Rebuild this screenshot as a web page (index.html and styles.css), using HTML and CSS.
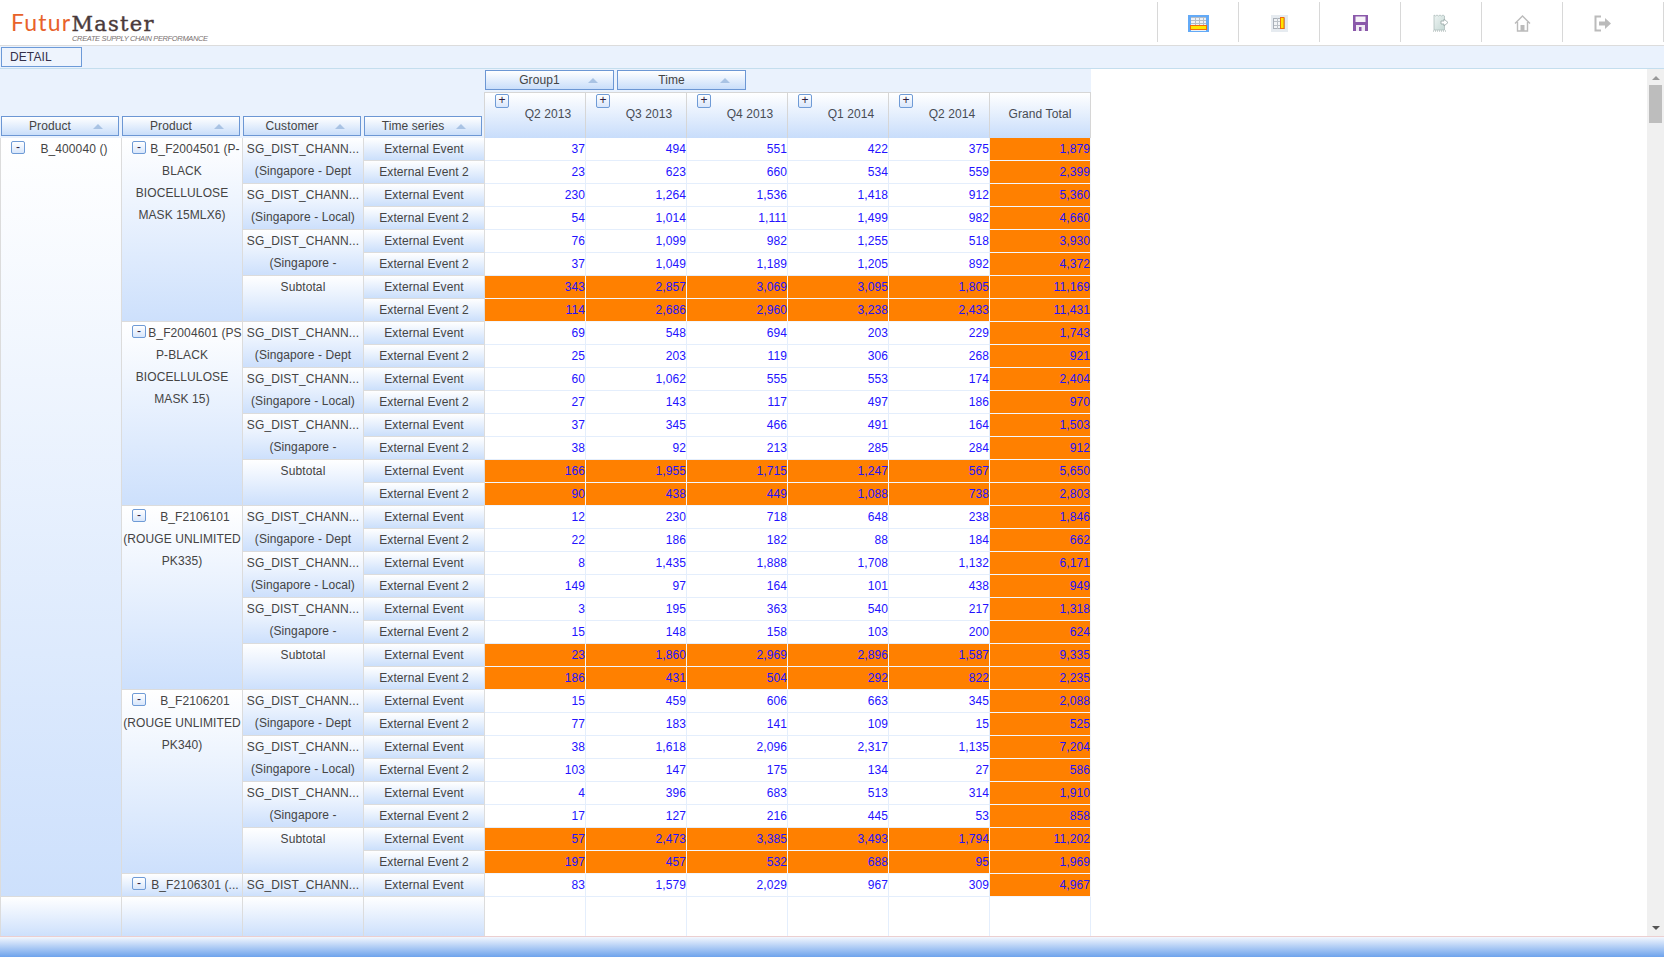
FILE: index.html
```html
<!DOCTYPE html>
<html lang="en">
<head>
    <meta charset="UTF-8">
    <title>FuturMaster - Detail</title>
    <link rel="stylesheet" href="styles.css">
</head>
<body>
    <header class="toolbar">
        <div class="logo">
            <div class="logo-name"><span class="futur">Futur</span><span class="master">Master</span></div>
            <div class="logo-tag">CREATE SUPPLY CHAIN PERFORMANCE</div>
        </div>
        <div class="tool">
            <svg width="21" height="17" viewBox="0 0 21 17"><rect width="21" height="17" fill="#63aaf7"/><rect x="3" y="2" width="15" height="14" fill="#eef1f5"/><path d="M3 2.500h15M3 5.500h15M3 8.500h15M7.500 2v8M11.500 2v8M15.500 2v8" stroke="#b4bcc6" fill="none"/><rect x="2.500" y="10.500" width="16" height="4" fill="#ffe600" stroke="#f06a10"/></svg>
        </div>
        <div class="tool">
            <svg width="17" height="17" viewBox="0 0 17 17"><rect width="17" height="17" fill="#e6ebf0"/><rect x="2.500" y="3.500" width="11" height="10" fill="#f2f4f6" stroke="#aab0b8"/><path d="M3 6.500h6M3 10.500h6M6.500 3v11" stroke="#bcc2c8"/><rect x="9.500" y="2.500" width="3.500" height="11" fill="#ffe600" stroke="#f06a10"/></svg>
        </div>
        <div class="tool">
            <svg width="15" height="16" viewBox="0 0 15 16"><rect width="15" height="16" fill="#8a58aa"/><rect x="2.500" y="1.500" width="10" height="5.500" fill="#f6f2f8"/><rect x="3" y="10" width="9" height="6" fill="#f0eaf4"/><rect x="6" y="12" width="2.500" height="4" fill="#8a58aa"/></svg>
        </div>
        <div class="tool">
            <svg width="16" height="18" viewBox="0 0 16 18">
                <defs><linearGradient id="doc" x1="0" y1="0" x2="1" y2="1"><stop offset="0" stop-color="#eef4f3"/><stop offset="1" stop-color="#c6d9d5"/></linearGradient></defs>
                <path d="M1 1l1.500 1 1.500-1 1.500 1 1.500-1 1.500 1 1.500-1 1.500 1V16H1z" fill="url(#doc)" stroke="#a8b8b6" stroke-width=".7"/>
                <path d="M8 7h3V5l4 3.500-4 3.500v-2H8z" fill="#fff" stroke="#98a6a4" stroke-width=".8"/>
                <path d="M0 17h14" stroke="#a0aeac" stroke-dasharray="1 1"/>
            </svg>
        </div>
        <div class="tool">
            <svg width="17" height="17" viewBox="0 0 17 17"><path d="M1 8.500L8.500 1 16 8.500M3.500 7v9h10V7" fill="#fff" stroke="#bbb" stroke-width="1.400"/><rect x="6.500" y="10" width="4" height="6" fill="#bbb"/></svg>
        </div>
        <div class="tool tool-last">
            <svg width="17" height="17" viewBox="0 0 17 17"><path d="M7 1.500H1.500v14H7" fill="none" stroke="#bbb" stroke-width="2"/><path d="M5 6.500h6V3l6 5.500-6 5.500v-3.500H5z" fill="#bbb"/></svg>
        </div>
    </header>

    <nav class="sections">
        <div class="section-tab">DETAIL</div>
    </nav>

    <main class="content">
        <table class="pivot">
            <colgroup>
                <col class="c-row-first"><col class="c-row"><col class="c-row"><col class="c-row">
                <col class="c-num"><col class="c-num"><col class="c-num"><col class="c-num"><col class="c-num"><col class="c-num">
            </colgroup>
            <thead>
                <tr class="tabs-row">
                    <td colspan="4" rowspan="2" class="row-tabs">
                        <div class="tabs">
                            <div class="tab tab-row"><span>Product</span><i class="tab-arrow"></i></div>
                            <div class="tab tab-row"><span>Product</span><i class="tab-arrow"></i></div>
                            <div class="tab tab-row"><span>Customer</span><i class="tab-arrow"></i></div>
                            <div class="tab tab-row"><span>Time series</span><i class="tab-arrow"></i></div>
                        </div>
                    </td>
                    <td colspan="6" class="col-tabs">
                        <div class="tabs">
                            <div class="tab tab-col"><span>Group1</span><i class="tab-arrow"></i></div>
                            <div class="tab tab-col"><span>Time</span><i class="tab-arrow"></i></div>
                        </div>
                    </td>
                </tr>
                <tr class="heads-row">
                    <th><span class="toggle toggle-head">+</span><div class="head-label">Q2 2013</div></th>
                    <th><span class="toggle toggle-head">+</span><div class="head-label">Q3 2013</div></th>
                    <th><span class="toggle toggle-head">+</span><div class="head-label">Q4 2013</div></th>
                    <th><span class="toggle toggle-head">+</span><div class="head-label">Q1 2014</div></th>
                    <th><span class="toggle toggle-head">+</span><div class="head-label">Q2 2014</div></th>
                    <th><div class="head-label">Grand Total</div></th>
                </tr>
            </thead>
            <tbody>
                <tr>
                    <td rowspan="33" class="grp first"><span class="toggle">-</span><div class="line">B_400040 ()</div></td>
                    <td rowspan="8" class="grp"><span class="toggle">-</span><div class="line">B_F2004501 (P-</div><div class="line">BLACK</div><div class="line">BIOCELLULOSE</div><div class="line">MASK 15MLX6)</div></td>
                    <td rowspan="2" class="grp"><div class="line">SG_DIST_CHANN...</div><div class="line">(Singapore - Dept</div></td>
                    <td class="ts">External Event</td><td>37</td><td>494</td><td>551</td><td>422</td><td>375</td><td class="total">1,879</td>
                </tr>
                <tr><td class="ts">External Event 2</td><td>23</td><td>623</td><td>660</td><td>534</td><td>559</td><td class="total">2,399</td></tr>
                <tr><td rowspan="2" class="grp"><div class="line">SG_DIST_CHANN...</div><div class="line">(Singapore - Local)</div></td><td class="ts">External Event</td><td>230</td><td>1,264</td><td>1,536</td><td>1,418</td><td>912</td><td class="total">5,360</td></tr>
                <tr><td class="ts">External Event 2</td><td>54</td><td>1,014</td><td>1,111</td><td>1,499</td><td>982</td><td class="total">4,660</td></tr>
                <tr><td rowspan="2" class="grp"><div class="line">SG_DIST_CHANN...</div><div class="line">(Singapore -</div></td><td class="ts">External Event</td><td>76</td><td>1,099</td><td>982</td><td>1,255</td><td>518</td><td class="total">3,930</td></tr>
                <tr><td class="ts">External Event 2</td><td>37</td><td>1,049</td><td>1,189</td><td>1,205</td><td>892</td><td class="total">4,372</td></tr>
                <tr class="sub"><td rowspan="2" class="grp"><div class="line">Subtotal</div></td><td class="ts">External Event</td><td>343</td><td>2,857</td><td>3,069</td><td>3,095</td><td>1,805</td><td class="total">11,169</td></tr>
                <tr class="sub"><td class="ts">External Event 2</td><td>114</td><td>2,686</td><td>2,960</td><td>3,238</td><td>2,433</td><td class="total">11,431</td></tr>

                <tr>
                    <td rowspan="8" class="grp"><span class="toggle">-</span><div class="line">B_F2004601 (PS</div><div class="line">P-BLACK</div><div class="line">BIOCELLULOSE</div><div class="line">MASK 15)</div></td>
                    <td rowspan="2" class="grp"><div class="line">SG_DIST_CHANN...</div><div class="line">(Singapore - Dept</div></td>
                    <td class="ts">External Event</td><td>69</td><td>548</td><td>694</td><td>203</td><td>229</td><td class="total">1,743</td>
                </tr>
                <tr><td class="ts">External Event 2</td><td>25</td><td>203</td><td>119</td><td>306</td><td>268</td><td class="total">921</td></tr>
                <tr><td rowspan="2" class="grp"><div class="line">SG_DIST_CHANN...</div><div class="line">(Singapore - Local)</div></td><td class="ts">External Event</td><td>60</td><td>1,062</td><td>555</td><td>553</td><td>174</td><td class="total">2,404</td></tr>
                <tr><td class="ts">External Event 2</td><td>27</td><td>143</td><td>117</td><td>497</td><td>186</td><td class="total">970</td></tr>
                <tr><td rowspan="2" class="grp"><div class="line">SG_DIST_CHANN...</div><div class="line">(Singapore -</div></td><td class="ts">External Event</td><td>37</td><td>345</td><td>466</td><td>491</td><td>164</td><td class="total">1,503</td></tr>
                <tr><td class="ts">External Event 2</td><td>38</td><td>92</td><td>213</td><td>285</td><td>284</td><td class="total">912</td></tr>
                <tr class="sub"><td rowspan="2" class="grp"><div class="line">Subtotal</div></td><td class="ts">External Event</td><td>166</td><td>1,955</td><td>1,715</td><td>1,247</td><td>567</td><td class="total">5,650</td></tr>
                <tr class="sub"><td class="ts">External Event 2</td><td>90</td><td>438</td><td>449</td><td>1,088</td><td>738</td><td class="total">2,803</td></tr>

                <tr>
                    <td rowspan="8" class="grp"><span class="toggle">-</span><div class="line">B_F2106101</div><div class="line">(ROUGE UNLIMITED</div><div class="line">PK335)</div></td>
                    <td rowspan="2" class="grp"><div class="line">SG_DIST_CHANN...</div><div class="line">(Singapore - Dept</div></td>
                    <td class="ts">External Event</td><td>12</td><td>230</td><td>718</td><td>648</td><td>238</td><td class="total">1,846</td>
                </tr>
                <tr><td class="ts">External Event 2</td><td>22</td><td>186</td><td>182</td><td>88</td><td>184</td><td class="total">662</td></tr>
                <tr><td rowspan="2" class="grp"><div class="line">SG_DIST_CHANN...</div><div class="line">(Singapore - Local)</div></td><td class="ts">External Event</td><td>8</td><td>1,435</td><td>1,888</td><td>1,708</td><td>1,132</td><td class="total">6,171</td></tr>
                <tr><td class="ts">External Event 2</td><td>149</td><td>97</td><td>164</td><td>101</td><td>438</td><td class="total">949</td></tr>
                <tr><td rowspan="2" class="grp"><div class="line">SG_DIST_CHANN...</div><div class="line">(Singapore -</div></td><td class="ts">External Event</td><td>3</td><td>195</td><td>363</td><td>540</td><td>217</td><td class="total">1,318</td></tr>
                <tr><td class="ts">External Event 2</td><td>15</td><td>148</td><td>158</td><td>103</td><td>200</td><td class="total">624</td></tr>
                <tr class="sub"><td rowspan="2" class="grp"><div class="line">Subtotal</div></td><td class="ts">External Event</td><td>23</td><td>1,860</td><td>2,969</td><td>2,896</td><td>1,587</td><td class="total">9,335</td></tr>
                <tr class="sub"><td class="ts">External Event 2</td><td>186</td><td>431</td><td>504</td><td>292</td><td>822</td><td class="total">2,235</td></tr>

                <tr>
                    <td rowspan="8" class="grp"><span class="toggle">-</span><div class="line">B_F2106201</div><div class="line">(ROUGE UNLIMITED</div><div class="line">PK340)</div></td>
                    <td rowspan="2" class="grp"><div class="line">SG_DIST_CHANN...</div><div class="line">(Singapore - Dept</div></td>
                    <td class="ts">External Event</td><td>15</td><td>459</td><td>606</td><td>663</td><td>345</td><td class="total">2,088</td>
                </tr>
                <tr><td class="ts">External Event 2</td><td>77</td><td>183</td><td>141</td><td>109</td><td>15</td><td class="total">525</td></tr>
                <tr><td rowspan="2" class="grp"><div class="line">SG_DIST_CHANN...</div><div class="line">(Singapore - Local)</div></td><td class="ts">External Event</td><td>38</td><td>1,618</td><td>2,096</td><td>2,317</td><td>1,135</td><td class="total">7,204</td></tr>
                <tr><td class="ts">External Event 2</td><td>103</td><td>147</td><td>175</td><td>134</td><td>27</td><td class="total">586</td></tr>
                <tr><td rowspan="2" class="grp"><div class="line">SG_DIST_CHANN...</div><div class="line">(Singapore -</div></td><td class="ts">External Event</td><td>4</td><td>396</td><td>683</td><td>513</td><td>314</td><td class="total">1,910</td></tr>
                <tr><td class="ts">External Event 2</td><td>17</td><td>127</td><td>216</td><td>445</td><td>53</td><td class="total">858</td></tr>
                <tr class="sub"><td rowspan="2" class="grp"><div class="line">Subtotal</div></td><td class="ts">External Event</td><td>57</td><td>2,473</td><td>3,385</td><td>3,493</td><td>1,794</td><td class="total">11,202</td></tr>
                <tr class="sub"><td class="ts">External Event 2</td><td>197</td><td>457</td><td>532</td><td>688</td><td>95</td><td class="total">1,969</td></tr>

                <tr>
                    <td class="grp"><span class="toggle">-</span><div class="line">B_F2106301 (...</div></td>
                    <td class="grp"><div class="line">SG_DIST_CHANN...</div></td>
                    <td class="ts">External Event</td><td>83</td><td>1,579</td><td>2,029</td><td>967</td><td>309</td><td class="total">4,967</td>
                </tr>
            </tbody>
            <tfoot>
                <tr>
                    <td class="foot first"></td><td class="foot"></td><td class="foot"></td><td class="foot"></td>
                    <td></td><td></td><td></td><td></td><td></td><td></td>
                </tr>
            </tfoot>
        </table>
        <div class="blank"></div>
        <div class="scrollbar">
            <i class="arrow-up"></i>
            <div class="thumb"></div>
            <i class="arrow-down"></i>
        </div>
    </main>

    <footer class="statusbar"></footer>
</body>
</html>
```

FILE: styles.css
```css
* {
    box-sizing: border-box;
}
html, body {
    height: 100%;
}
body {
    margin: 0;
    display: flex;
    flex-direction: column;
    overflow: hidden;
    font-family: 'Liberation Sans', Arial, sans-serif;
    font-size: 12px;
    color: #444;
    background: #fff;
}

/* top bar */
.toolbar {
    display: flex;
    align-items: center;
    height: 46px;
    padding-top: 2px;
    padding-bottom: 3px;
    border-bottom: 1px solid #dcdcdc;
    flex-shrink: 0;
}
.logo {
    margin-right: auto;
    padding-left: 11px;
    align-self: flex-start;
    padding-top: 8px;
}
.logo-name {
    display: flex;
    align-items: baseline;
    height: 24px;
    line-height: 24px;
}
.futur {
    font-family: 'Lato', sans-serif;
    font-size: 23px;
    letter-spacing: 1.2px;
    color: #e8622a;
}
.master {
    font-family: 'DejaVu Serif', serif;
    font-size: 21px;
    letter-spacing: 1.3px;
    -webkit-text-stroke: 0.4px #4a3a3a;
    color: #4a3a3a;
}
.logo-tag {
    margin-left: 61px;
    font-size: 7.5px;
    line-height: 9px;
    font-style: italic;
    letter-spacing: -0.35px;
    color: #7a7272;
    white-space: nowrap;
}
.tool {
    width: 81px;
    height: 40px;
    display: flex;
    align-items: center;
    justify-content: center;
    border-left: 1px solid #d8d8d8;
}
.tool svg {
    margin-top: 2px;
}
.tool-last {
    width: 102px;
    padding-right: 21px;
    border-right: 1px solid #d8d8d8;
}

/* tab strip */
.sections {
    height: 23px;
    padding: 1px 0 0 1px;
    background: #eaf2fd;
    border-bottom: 1px solid #c4deee;
    flex-shrink: 0;
}
.section-tab {
    width: 81px;
    height: 20px;
    line-height: 18px;
    padding-left: 8px;
    letter-spacing: 0.1px;
    background: #eef4fd;
    border: 1px solid #6c9ad8;
    color: #33304a;
}

/* main */
.content {
    flex: 1;
    display: flex;
    min-height: 0;
}
.blank {
    flex: 1;
}
.scrollbar {
    width: 17px;
    display: flex;
    flex-direction: column;
    align-items: center;
    background: #f0f0f0;
    padding: 7px 0 6px;
}
.arrow-up, .arrow-down {
    width: 0;
    height: 0;
    border-left: 4px solid transparent;
    border-right: 4px solid transparent;
}
.arrow-up {
    border-bottom: 4px solid #999;
}
.arrow-down {
    margin-top: auto;
    border-top: 4px solid #555;
}
.thumb {
    width: 13px;
    height: 38px;
    margin-top: 5px;
    background: #bdbdbd;
}

/* pivot grid */
.pivot {
    width: 1091px;
    table-layout: fixed;
    border-collapse: separate;
    border-spacing: 0;
    height: 100%;
    letter-spacing: 0.1px;
}
.c-row-first { width: 122px; }
.c-row { width: 121px; }
.c-num { width: 101px; }

.pivot td, .pivot th {
    padding: 0;
    font-size: 12px;
    font-weight: normal;
}
thead td {
    background: #eaf2fd;
}
.tabs-row td {
    height: 23px;
}
.heads-row th {
    height: 46px;
    vertical-align: top;
    text-align: center;
    color: #484c54;
    background: linear-gradient(#fff, #c8ddfb);
    border-top: 1px solid #d6d6d6;
    border-right: 1px solid #d6d6d6;
}
.heads-row th:first-child {
    box-shadow: -1px 0 0 #d6d6d6;
}
.row-tabs {
    vertical-align: bottom;
    padding-bottom: 1px !important;
}
.row-tabs .tabs {
    padding-left: 1px;
    gap: 3px;
    margin-bottom: 1px;
}
.col-tabs {
    vertical-align: top;
    padding-top: 1px !important;
}
.col-tabs .tabs {
    gap: 3px;
}
.tabs {
    display: flex;
}
.tab {
    display: flex;
    align-items: center;
    height: 20px;
    padding-left: 5px;
    padding-right: 15px;
    background: linear-gradient(#fff, #c9defa);
    border: 1px solid #6c97d4;
    color: #444;
}
.tab span {
    flex: 1;
    text-align: center;
}
.tab-row {
    width: 118px;
}
.tab-col {
    width: 129px;
}
.tab-arrow {
    width: 0;
    height: 0;
    border-left: 5px solid transparent;
    border-right: 5px solid transparent;
    border-bottom: 5px solid #a9c3e4;
}
.head-label {
    margin-top: 10px;
    line-height: 22px;
    overflow: hidden;
    white-space: nowrap;
}

.toggle {
    float: left;
    width: 14px;
    height: 13px;
    line-height: 10px;
    margin: 3px 2px 0 10px;
    text-align: center;
    font-size: 12px;
    color: #302040;
    background: linear-gradient(#fff, #d8e6fb);
    border: 1px solid #6f9bd6;
    border-radius: 2px;
}
.toggle-head {
    height: 14px;
    line-height: 11px;
    margin-top: 1px;
}

tbody tr, tfoot tr {
    height: 23px;
}
tbody td {
    height: 23px;
    line-height: 21px;
    text-align: right;
    white-space: nowrap;
    color: #2312ff;
    background: #fff;
    border-right: 1px solid #e4eefc;
    border-bottom: 1px solid #e4eefc;
}
tbody td.grp {
    vertical-align: top;
    text-align: center;
    color: #444;
    background: linear-gradient(#fff, #cde0fc);
    border-right: 1px solid #dcdcdc;
    border-bottom: 1px solid #dcdcdc;
}
tbody td.first, tfoot td.first {
    border-left: 1px solid #dcdcdc;
}
.line {
    height: 22px;
    line-height: 22px;
    overflow: hidden;
    white-space: nowrap;
}
tbody td.ts {
    text-align: center;
    color: #444;
    background: linear-gradient(#fff, #cbdffb);
    border-right: 1px solid #dcdcdc;
    border-bottom: 1px solid #dcdcdc;
}
tbody td.total, tr.sub td:not(.ts):not(.grp) {
    background: #ff8000;
    border-right-color: #f2f6fd;
    border-bottom-color: #f2f6fd;
}
tfoot td {
    height: 39px;
    border-right: 1px solid #e4eefc;
}
tfoot td.foot {
    background: linear-gradient(#fff, #cde0fc);
    border-right: 1px solid #dcdcdc;
}

.statusbar {
    height: 21px;
    flex-shrink: 0;
    border-top: 1px solid #eccfd0;
    background: linear-gradient(#f3f7fe, #6ea3ec);
}
```
